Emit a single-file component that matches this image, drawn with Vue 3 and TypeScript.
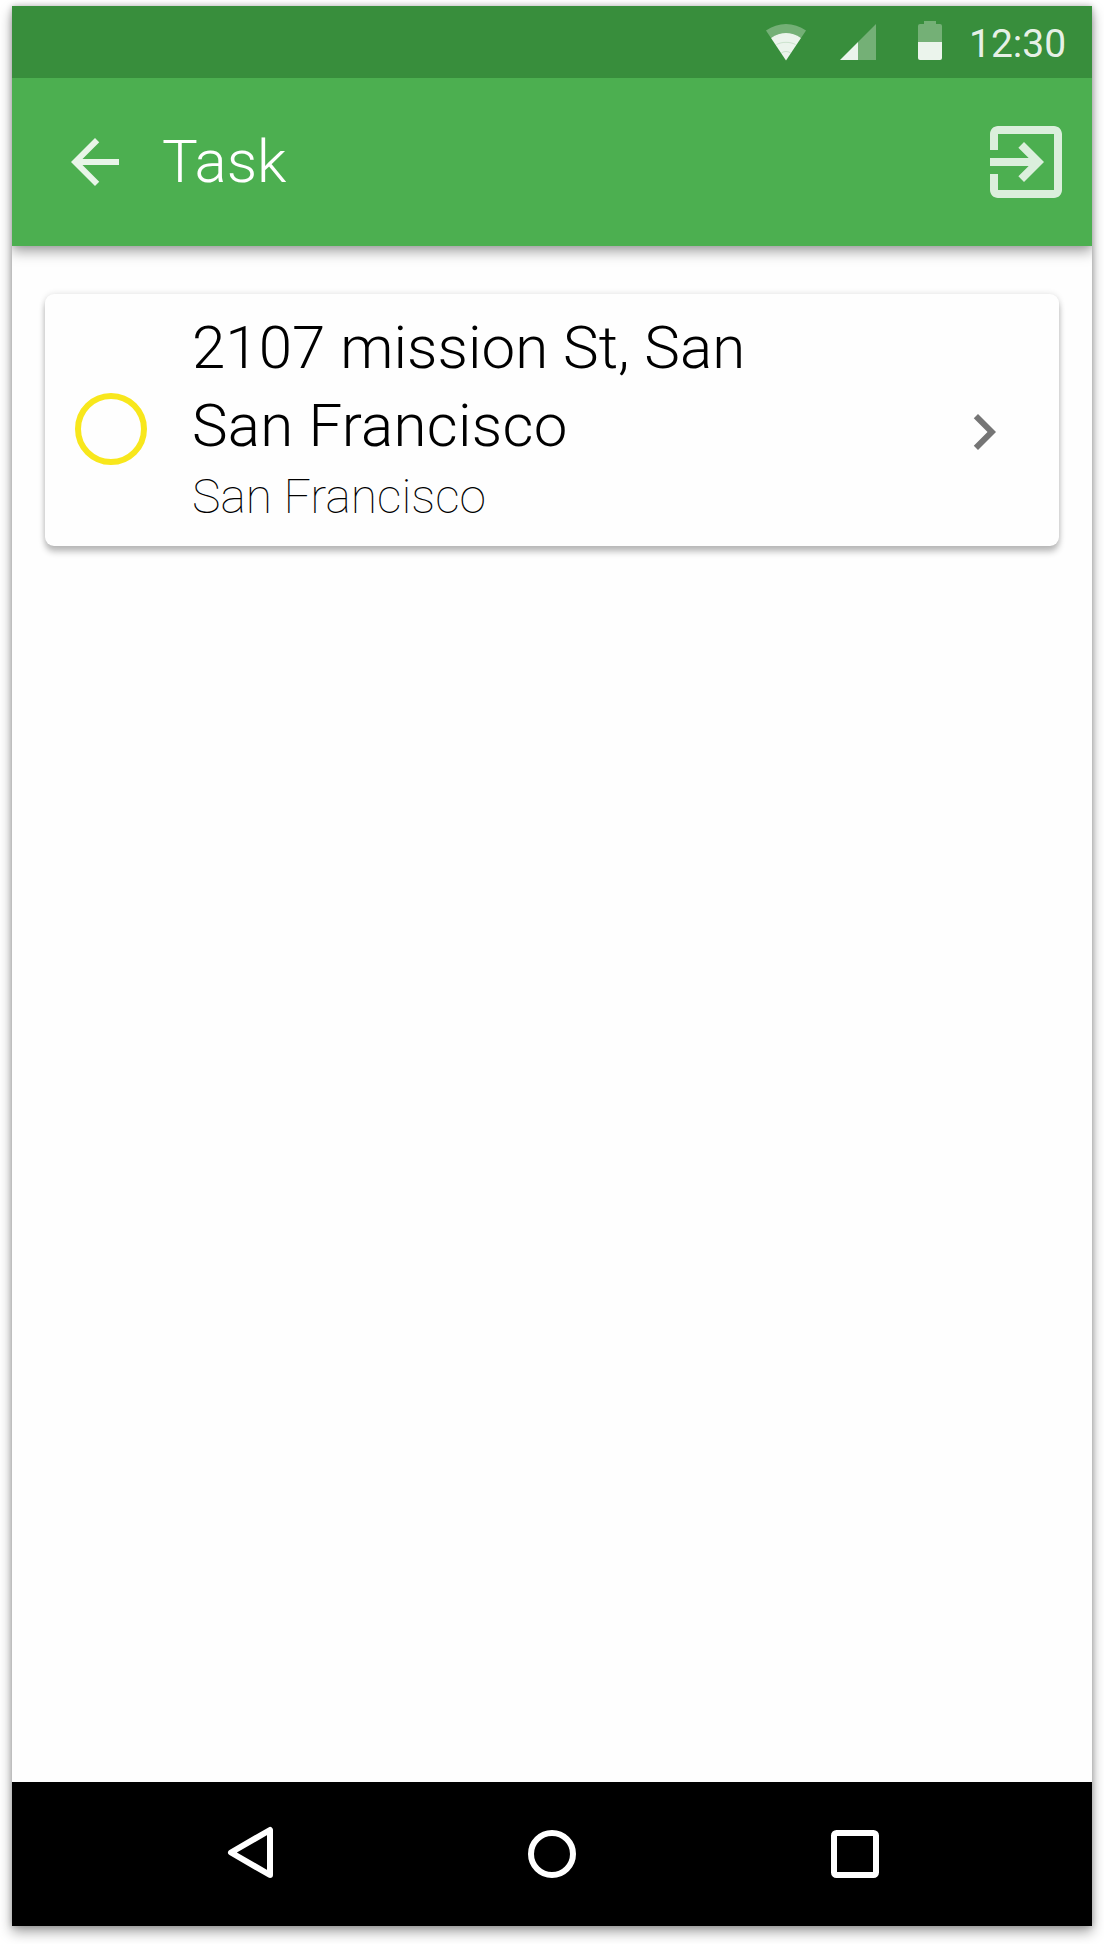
<script setup lang="ts">
interface Task {
  id: number
  street: string
  town: string
  city: string
}

const title = 'Task'
const time = '12:30'
const tasks: Task[] = [
  { id: 1, street: '2107 mission St, San', town: 'San Francisco', city: 'San Francisco' },
]
</script>

<template>
  <div class="stage">
    <div class="device">
      <header class="status-bar">
        <svg class="wifi" width="42" height="42" viewBox="0 0 42 42">
          <path d="M1 6.6C13 -2.2 29 -2.2 41 6.6L36 14C27 7.4 15 7.4 6 14Z" fill="#fff" fill-opacity=".3" />
          <path d="M6 14C15 7.4 27 7.4 36 14L21 36.5Z" fill="#fff" fill-opacity=".9" />
          <path d="M11.5 20.5C17 17.6 25 17.6 30.5 20.5M16.5 28.8C19 27.1 23 27.1 25.5 28.8" fill="none" stroke="#388e3c" stroke-opacity=".3" stroke-width=".6" />
        </svg>
        <svg class="signal" width="36" height="42" viewBox="0 0 36 42">
          <path d="M36 0V36H18V18Z" fill="#fff" fill-opacity=".3" />
          <path d="M0 36L18 18V36Z" fill="#fff" fill-opacity=".9" />
        </svg>
        <svg class="battery" width="24" height="42" viewBox="0 0 24 42">
          <path d="M6 0H18V3H22Q24 3 24 5V21H0V5Q0 3 2 3H6Z" fill="#fff" fill-opacity=".3" />
          <path d="M0 21H24V37Q24 39 22 39H2Q0 39 0 37Z" fill="#fff" fill-opacity=".9" />
        </svg>
        <span class="time">{{ time }}</span>
      </header>

      <nav class="app-bar">
        <svg class="back" width="72" height="72" viewBox="0 0 24 24">
          <path d="M20 11H7.83l5.59-5.59L12 4l-8 8 8 8 1.41-1.41L7.83 13H20v-2z" />
        </svg>
        <h1>{{ title }}</h1>
        <svg class="exit" width="96" height="96" viewBox="0 0 24 24">
          <path d="M10.09 15.59L11.5 17l5-5-5-5-1.41 1.41L12.67 11H3v2h9.67l-2.58 2.59zM19 3H5c-1.11 0-2 .9-2 2v4h2V5h14v14H5v-4H3v4c0 1.1.89 2 2 2h14c1.1 0 2-.9 2-2V5c0-1.1-.9-2-2-2z" />
        </svg>
      </nav>

      <main class="content">
        <article v-for="task in tasks" :key="task.id" class="card">
          <span class="marker"></span>
          <div class="info">
            <p class="address">{{ task.street }}</p>
            <p class="address town">{{ task.town }}</p>
            <p class="city">{{ task.city }}</p>
          </div>
          <svg class="chevron" width="72" height="72" viewBox="0 0 24 24">
            <path d="M10 6L8.59 7.41 13.17 12l-4.58 4.59L10 18l6-6z" />
          </svg>
        </article>
      </main>

      <footer class="nav-bar">
        <svg width="54" height="54" viewBox="0 0 54 54">
          <path d="M48 6V51L9 28.5Z" />
        </svg>
        <svg width="54" height="54" viewBox="0 0 54 54">
          <circle cx="27" cy="30" r="21" />
        </svg>
        <svg width="54" height="54" viewBox="0 0 54 54">
          <rect x="6" y="9" width="42" height="42" rx="2.5" />
        </svg>
      </footer>
    </div>
  </div>
</template>

<style>
body {
  margin: 0;
  background: #fff;
}
</style>

<style scoped>
.stage {
  box-sizing: border-box;
  width: 1104px;
  height: 1944px;
  padding: 6px 12px 18px;
  overflow: hidden;
  background: #fff;
  font-family: Roboto, sans-serif;
}
.device {
  display: flex;
  flex-direction: column;
  width: 1080px;
  height: 1920px;
  overflow: hidden;
  background: #fefefe;
  box-shadow: 0 0 6px rgba(0, 0, 0, 0.24), 0 6px 12px rgba(0, 0, 0, 0.36);
}
.status-bar {
  display: flex;
  align-items: flex-start;
  height: 72px;
  background: #388e3c;
  z-index: 2;
}
.status-bar svg {
  display: block;
  flex: none;
}
.wifi {
  margin: 18px 0 0 753px;
}
.signal {
  margin: 18px 0 0 33px;
}
.battery {
  margin: 15px 0 0 42px;
}
.time {
  margin-left: 27px;
  font-size: 39px;
  line-height: 77px;
  color: rgba(255, 255, 255, 0.9);
}
.app-bar {
  display: flex;
  align-items: center;
  height: 168px;
  background: #4caf50;
  box-shadow: 0 0 6px rgba(0, 0, 0, 0.12), 0 6px 12px rgba(0, 0, 0, 0.34);
  z-index: 1;
}
.back {
  margin-left: 47px;
  fill: rgba(255, 255, 255, 0.87);
}
h1 {
  flex: 1;
  margin: 0 0 0 31px;
  font-size: 60px;
  font-weight: 300;
  line-height: 78px;
  color: #fff;
}
.exit {
  margin-right: 18px;
  fill: rgba(255, 255, 255, 0.8);
}
.content {
  flex: 1;
  padding: 48px 33px;
}
.card {
  box-sizing: border-box;
  display: flex;
  align-items: center;
  height: 252px;
  padding: 0 39px 0 30px;
  border-radius: 9px;
  background: #fefefe;
  box-shadow: 0 0 6px rgba(0, 0, 0, 0.12), 0 6px 6px rgba(0, 0, 0, 0.24);
}
.marker {
  box-sizing: border-box;
  width: 72px;
  height: 72px;
  margin-top: 18px;
  border: 6px solid #f8e71c;
  border-radius: 50%;
}
.info {
  flex: 1;
  align-self: flex-start;
  margin: 15px 0 0 45px;
  color: #000;
}
.info p {
  margin: 0;
  white-space: nowrap;
}
.address {
  font-size: 60px;
  font-weight: 300;
  line-height: 78px;
  letter-spacing: 0.08px;
}
.town {
  letter-spacing: 0.28px;
}
.city {
  font-size: 48px;
  font-weight: 100;
  line-height: 63px;
}
.chevron {
  margin-top: 24px;
  fill: #757575;
}
.nav-bar {
  display: flex;
  align-items: flex-start;
  justify-content: center;
  gap: 249px;
  box-sizing: border-box;
  height: 144px;
  padding-top: 42px;
  background: #000;
}
.nav-bar svg {
  fill: none;
  stroke: #fff;
  stroke-width: 6;
  stroke-linejoin: round;
}
</style>
